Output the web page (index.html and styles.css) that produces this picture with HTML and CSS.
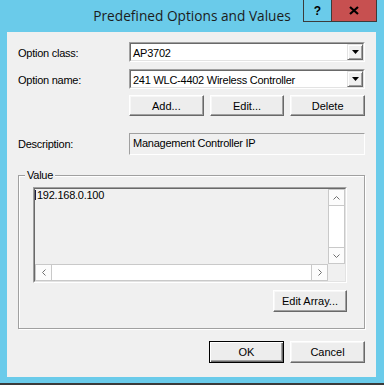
FILE: index.html
```html
<!DOCTYPE html>
<html lang="en">
<head>
  <meta charset="UTF-8">
  <title>Predefined Options and Values</title>
  <link rel="stylesheet" href="styles.css">
</head>
<body>
  <div class="window">
    <div class="titlebar">
      <span></span>
      <h1 class="title">Predefined Options and Values</h1>
      <div class="caption-btns">
        <span class="cap-btn help">?</span>
        <span class="cap-btn close">
          <svg width="10" height="9" viewBox="0 0 10 9"><path d="M1 1 L9 8 M9 1 L1 8" stroke="#000" stroke-width="2.2" fill="none"/></svg>
        </span>
      </div>
    </div>

    <div class="client">
      <div class="row">
        <label class="row-label">Option class:</label>
        <div class="combo">
          <div class="combo-in">
            <span class="combo-text">AP3702</span>
            <span class="drop"><svg width="7" height="4" viewBox="0 0 7 4"><polygon points="0,0 7,0 3.5,4" fill="#000"/></svg></span>
          </div>
        </div>
      </div>

      <div class="row row-gap">
        <label class="row-label">Option name:</label>
        <div class="combo">
          <div class="combo-in">
            <span class="combo-text">241 WLC-4402 Wireless Controller</span>
            <span class="drop"><svg width="7" height="4" viewBox="0 0 7 4"><polygon points="0,0 7,0 3.5,4" fill="#000"/></svg></span>
          </div>
        </div>
      </div>

      <div class="btn-row">
        <button class="btn">Add...</button>
        <button class="btn">Edit...</button>
        <button class="btn">Delete</button>
      </div>

      <div class="row desc-row">
        <label class="row-label">Description:</label>
        <div class="readonly">Management Controller IP</div>
      </div>

      <fieldset class="group">
        <legend>Value</legend>
        <div class="value-box">
          <div class="value-in">
            <div class="value-text"><span class="caret"></span>192.168.0.100</div>
            <div class="vscroll">
              <span class="sb-btn"><svg width="7" height="4" viewBox="0 0 7 4"><polyline points="0.5,3.5 3.5,0.5 6.5,3.5" stroke="#707070" fill="none"/></svg></span>
              <span class="sb-track"></span>
              <span class="sb-btn"><svg width="7" height="4" viewBox="0 0 7 4"><polyline points="0.5,0.5 3.5,3.5 6.5,0.5" stroke="#707070" fill="none"/></svg></span>
            </div>
            <div class="hscroll">
              <span class="sb-btn"><svg width="4" height="7" viewBox="0 0 4 7"><polyline points="3.5,0.5 0.5,3.5 3.5,6.5" stroke="#707070" fill="none"/></svg></span>
              <span class="sb-track"></span>
              <span class="sb-btn"><svg width="4" height="7" viewBox="0 0 4 7"><polyline points="0.5,0.5 3.5,3.5 0.5,6.5" stroke="#707070" fill="none"/></svg></span>
            </div>
            <div class="corner"></div>
          </div>
        </div>
        <div class="group-actions">
          <button class="btn wide">Edit Array...</button>
        </div>
      </fieldset>

      <div class="dialog-actions">
        <button class="btn default">OK</button>
        <button class="btn">Cancel</button>
      </div>
    </div>
  </div>
</body>
</html>
```

FILE: styles.css
```css
body {
  margin: 0;
  background: #fff;
  font-family: 'Liberation Sans', Arial, sans-serif;
  font-size: 11px;
  letter-spacing: -0.25px;
  color: #000;
}

.window {
  width: 384px;
  height: 385px;
  box-sizing: border-box;
  background: #6acbea;
  border-bottom: 2px solid #3a3a3a;
  display: flex;
  flex-direction: column;
}

/* title bar */
.titlebar {
  height: 32px;
  display: grid;
  grid-template-columns: 1fr auto 1fr;
}

.title {
  margin: 0;
  font-family: 'Open Sans', 'Noto Sans', sans-serif;
  font-weight: normal;
  font-size: 13.7px;
  letter-spacing: 0;
  line-height: 32px;
  color: #1c1c1c;
}

.caption-btns {
  justify-self: end;
  align-self: start;
  margin-right: 7px;
  display: flex;
  height: 22px;
  box-sizing: border-box;
  border: 1px solid #3b3b3b;
  border-top: none;
}

.cap-btn {
  display: flex;
  align-items: center;
  justify-content: center;
}

.help {
  width: 27px;
  font-weight: bold;
  font-size: 12px;
  letter-spacing: 0;
}

.close {
  width: 44px;
  background: #c75050;
  border-left: 1px solid #3b3b3b;
}

/* client area */
.client {
  height: 345px;
  margin: 0 8px 0 7px;
  box-sizing: border-box;
  padding: 10px 11px 0 11px;
  background: #f0f0f0;
}

.row {
  display: flex;
  height: 20px;
}

.row-gap {
  margin-top: 7px;
}

.row-label {
  width: 111px;
  line-height: 20px;
  padding-top: 1px;
}

.combo {
  width: 236px;
  box-sizing: border-box;
  border: 1px solid;
  border-color: #a0a0a0 #fff #fff #a0a0a0;
}

.combo-in {
  height: 100%;
  box-sizing: border-box;
  border: 1px solid;
  border-color: #696969 #e3e3e3 #e3e3e3 #696969;
  background: #fff;
  display: flex;
}

.combo-text {
  flex: 1;
  padding: 1px 0 0 2px;
  line-height: 16px;
  white-space: nowrap;
}

.drop {
  width: 16px;
  box-sizing: border-box;
  background: #f0f0f0;
  border: 1px solid;
  border-color: #e3e3e3 #696969 #696969 #e3e3e3;
  box-shadow: inset 1px 1px #fff, inset -1px -1px #a0a0a0;
  display: flex;
  align-items: center;
  justify-content: center;
}

.btn-row {
  margin-top: 6px;
  padding-left: 111px;
  display: grid;
  grid-template-columns: repeat(3, 1fr);
  gap: 6px;
  height: 21px;
}

.btn {
  box-sizing: border-box;
  padding: 0;
  font: inherit;
  color: #000;
  background: #ededed;
  border: 1px solid;
  border-color: #fff #696969 #696969 #fff;
  box-shadow: inset -1px -1px #a0a0a0, inset 1px 1px #f7f7f7;
}

.desc-row {
  margin-top: 17px;
  height: 22px;
}

.desc-row .row-label {
  line-height: 22px;
  padding-top: 0;
}

.readonly {
  width: 236px;
  box-sizing: border-box;
  border: 1px solid;
  border-color: #a0a0a0 #fff #fff #a0a0a0;
  padding-left: 3px;
  line-height: 18px;
}

/* value group */
.group {
  margin: 14px 0 0 0;
  padding: 5px 17px 16px 14px;
  min-width: 0;
  border: 1px solid #a0a0a0;
  box-shadow: inset 1px 1px #fff, 1px 1px #fff;
}

.group legend {
  margin-left: -8px;
  padding: 0 2px;
  line-height: 13px;
  background: #f0f0f0;
}

.value-box {
  height: 96px;
  box-sizing: border-box;
  border: 1px solid;
  border-color: #a0a0a0 #fff #fff #a0a0a0;
}

.value-in {
  height: 100%;
  box-sizing: border-box;
  border: 1px solid;
  border-color: #696969 #e3e3e3 #e3e3e3 #696969;
  background: #f0f0f0;
  display: grid;
  grid-template-columns: 1fr 17px;
  grid-template-rows: 1fr 17px;
}

.value-text {
  line-height: 13px;
  white-space: nowrap;
}

.caret {
  display: inline-block;
  width: 1px;
  height: 10px;
  margin-right: 1px;
  background: #1a1a40;
  vertical-align: -1px;
}

.vscroll,
.hscroll {
  display: flex;
  background: #fff;
}

.vscroll {
  flex-direction: column;
  border: 1px solid #c9c9c9;
}

.hscroll {
  border: 1px solid #c9c9c9;
}

.sb-btn {
  display: flex;
  align-items: center;
  justify-content: center;
  flex: 0 0 15px;
  background: #fcfcfc;
}

.vscroll .sb-btn:first-child { border-bottom: 1px solid #c9c9c9; }
.vscroll .sb-btn:last-child { border-top: 1px solid #c9c9c9; }
.hscroll .sb-btn:first-child { border-right: 1px solid #c9c9c9; }
.hscroll .sb-btn:last-child { border-left: 1px solid #c9c9c9; }

.sb-track {
  flex: 1;
}

.corner {
  background: #f0f0f0;
}

.group-actions {
  margin-top: 7px;
  display: flex;
  justify-content: flex-end;
}

.btn.wide {
  width: 74px;
  height: 22px;
}

.btn-row .btn {
  height: 21px;
}

/* bottom buttons */
.dialog-actions {
  margin-top: 12px;
  display: flex;
  justify-content: flex-end;
  gap: 6px;
}

.dialog-actions .btn {
  width: 75px;
  height: 22px;
}

.btn.default {
  border: 1px solid #000;
  box-shadow: inset 1px 1px #fff, inset -1px -1px #696969, inset -2px -2px #a0a0a0;
}
```
